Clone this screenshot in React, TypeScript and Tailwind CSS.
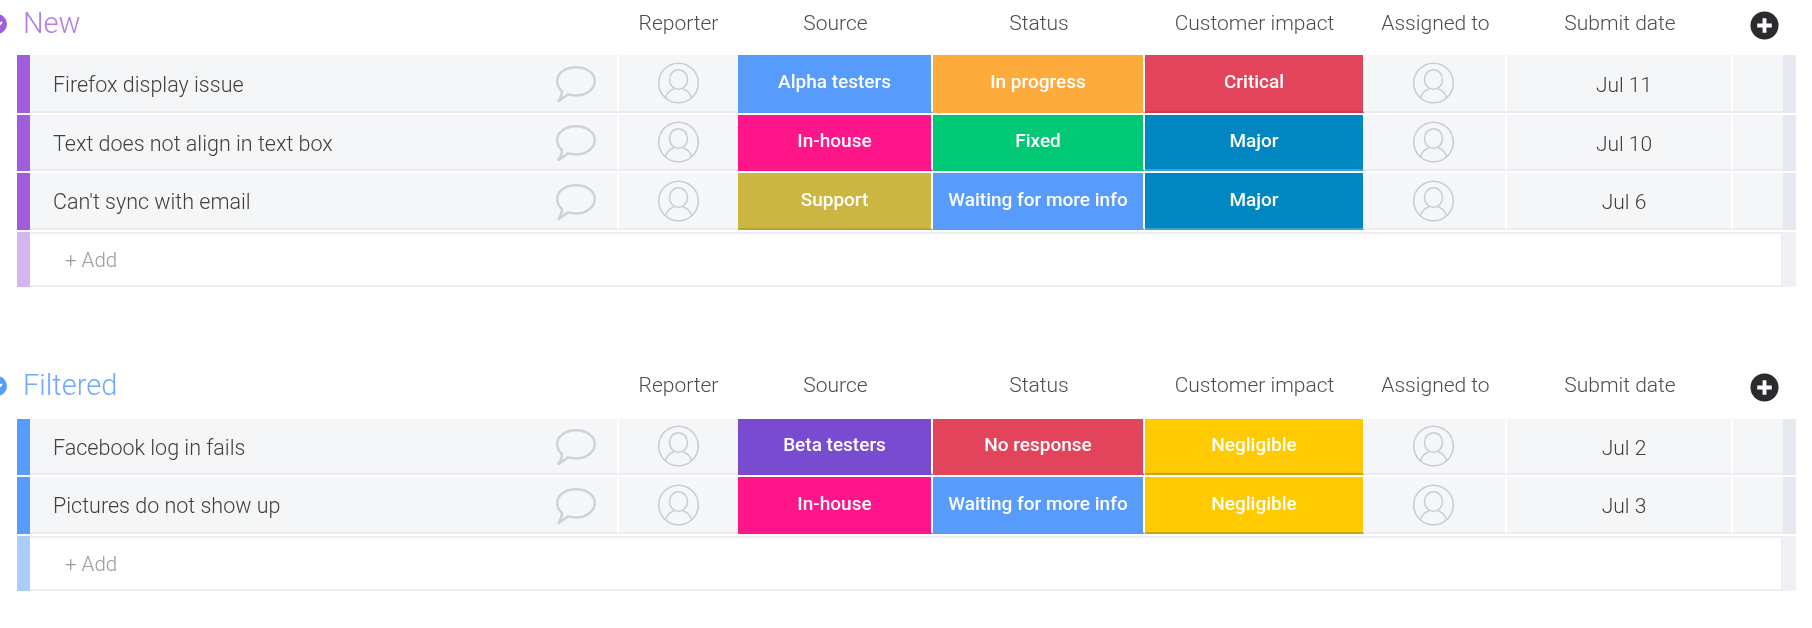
import React from "react";

type Row = {
  name: string;
  source: [string, string, string];
  status: [string, string, string];
  impact: [string, string, string];
  date: string;
  height: string;
};

const alpha: [string, string, string] = ["Alpha testers", "bg-[#579bfc]", "border-[#579bfc]"];
const inHouse: [string, string, string] = ["In-house", "bg-[#ff158a]", "border-[#ff158a]"];
const support: [string, string, string] = ["Support", "bg-[#cab641]", "border-[#b8a536]"];
const beta: [string, string, string] = ["Beta testers", "bg-[#784bd1]", "border-[#784bd1]"];
const waiting: [string, string, string] = ["Waiting for more info", "bg-[#579bfc]", "border-[#579bfc]"];
const major: [string, string, string] = ["Major", "bg-[#0086c0]", "border-[#3aa3d8]"];
const negligible: [string, string, string] = ["Negligible", "bg-[#ffcb00]", "border-[#c9a40a]"];

const newRows: Row[] = [
  {
    name: "Firefox display issue",
    source: alpha,
    status: ["In progress", "bg-[#fdab3d]", "border-[#fdab3d]"],
    impact: ["Critical", "bg-[#e2445c]", "border-[#cf3a50]"],
    date: "Jul 11",
    height: "h-[58px]",
  },
  {
    name: "Text does not align in text box",
    source: inHouse,
    status: ["Fixed", "bg-[#00c875]", "border-[#00c875]"],
    impact: major,
    date: "Jul 10",
    height: "h-[56px]",
  },
  {
    name: "Can't sync with email",
    source: support,
    status: waiting,
    impact: major,
    date: "Jul 6",
    height: "h-[57px]",
  },
];

const filteredRows: Row[] = [
  {
    name: "Facebook log in fails",
    source: beta,
    status: ["No response", "bg-[#e2445c]", "border-[#e2445c]"],
    impact: negligible,
    date: "Jul 2",
    height: "h-[56px]",
  },
  {
    name: "Pictures do not show up",
    source: inHouse,
    status: waiting,
    impact: negligible,
    date: "Jul 3",
    height: "h-[57px]",
  },
];

const PersonIcon = () => (
  <svg width="41" height="42" viewBox="0 0 41 42" fill="none" stroke="#c9cbd3" strokeWidth="1.5">
    <circle cx="20.5" cy="21" r="19.8" />
    <ellipse cx="20.5" cy="17.5" rx="9" ry="9.8" />
    <path d="M7.5 35.5C9 30.5 13 27.5 16 27M33.5 35.5C32 30.5 28 27.5 25 27" />
  </svg>
);

const CommentIcon = () => (
  <svg width="40" height="37" viewBox="0 0 40 37" fill="none" stroke="#cfd1d9" strokeWidth="2.4">
    <path d="M6 25C3 22.5 1.2 19 1.2 15C1.2 7 9.5 1.2 20 1.2S38.8 7 38.8 15S30.5 29.5 20 29.5C17 29.5 14.5 29 12 28.4L2 35.5C4.5 32 6 29 6 25Z" />
  </svg>
);

const PlusIcon = () => (
  <svg width="29" height="29" viewBox="0 0 30 30">
    <circle cx="15" cy="15" r="14.5" fill="#2b2b2f" />
    <path d="M15 7.5V22.5M7.5 15H22.5" stroke="#fff" strokeWidth="4" />
  </svg>
);

const Caret = ({ color }: { color: string }) => (
  <svg width="20" height="20" viewBox="0 0 20 20" className="shrink-0">
    <circle cx="10" cy="10" r="10" fill={color} />
    <path d="M5 8L10 13L15 8" fill="none" stroke="#fff" strokeWidth="2" />
  </svg>
);

const StatusCell = ({ cell, width, edge }: { cell: [string, string, string]; width: string; edge: string }) => (
  <div
    className={`${width} ${cell[1]} ${cell[2]} ${edge} flex shrink-0 items-center justify-center border-b-2 !border-r-white pb-[1px] text-[19px] font-medium text-white`}
  >
    {cell[0]}
  </div>
);

const Header = ({ title, color, dot }: { title: string; color: string; dot: string }) => (
  <div className="flex h-[40px] items-center text-[21px] font-light text-[#4d4d4d]">
    <div className="-ml-[30px] flex w-[619px] shrink-0 items-center gap-[16px]">
      <Caret color={dot} />
      <span className={`text-[29px] font-light ${color}`}>{title}</span>
    </div>
    <div className="ml-[13px] w-[119px] shrink-0 text-center">Reporter</div>
    <div className="w-[195px] shrink-0 text-center">Source</div>
    <div className="w-[212px] shrink-0 text-center">Status</div>
    <div className="w-[219px] shrink-0 text-center">Customer impact</div>
    <div className="w-[143px] shrink-0 text-center">Assigned to</div>
    <div className="w-[226px] shrink-0 text-center">Submit date</div>
    <div className="flex w-[50px] shrink-0 justify-center pl-[12px] pt-[2px]">
      <PlusIcon />
    </div>
  </div>
);

const TableRow = ({ row, bar }: { row: Row; bar: string }) => (
  <div className={`flex ${row.height} mb-[2px] w-[1779px] text-[#3f3f3f]`}>
    <div className={`w-[13px] shrink-0 ${bar}`} />
    <div className="flex w-[589px] shrink-0 items-center justify-between border-b-2 border-r-2 border-b-[#e9ebf0] border-r-white bg-[#f5f6f8] pl-[23px] pr-[21px]">
      <span className="pt-[4px] text-[21.5px] font-light">{row.name}</span>
      <span className="pt-[3px]">
        <CommentIcon />
      </span>
    </div>
    <div className="flex w-[119px] shrink-0 items-center justify-center border-b-2 border-b-[#e9ebf0] bg-[#f5f6f8]">
      <PersonIcon />
    </div>
    <StatusCell cell={row.source} width="w-[195px]" edge="border-r-2" />
    <StatusCell cell={row.status} width="w-[212px]" edge="border-r-2" />
    <StatusCell cell={row.impact} width="w-[219px]" edge="border-r" />
    <div className="flex w-[143px] shrink-0 items-center justify-center border-b-2 border-r-2 border-b-[#e9ebf0] border-r-white bg-[#f5f6f8] pr-[2px]">
      <PersonIcon />
    </div>
    <div className="flex w-[226px] shrink-0 items-center justify-center border-b-2 border-r-2 border-b-[#e9ebf0] border-r-white bg-[#f5f6f8] pl-[10px] pt-[5px] text-[21px] font-light">
      {row.date}
    </div>
    <div className="w-[50px] shrink-0 border-b-2 border-b-[#e9ebf0] bg-[#f5f6f8]" />
    <div className="w-[13px] shrink-0 bg-[#e6e9ef]" />
  </div>
);

const AddRow = ({ bar }: { bar: string }) => (
  <div className="flex h-[55px] w-[1779px]">
    <div className={`w-[13px] shrink-0 ${bar}`} />
    <div className="flex flex-1 items-center border-y-2 border-r-2 border-[#eceef2] bg-white pl-[35px] pt-[1px] text-[20.5px] font-light text-[#9a9a9a]">
      + Add
    </div>
    <div className="w-[13px] shrink-0 bg-[#eff1f5]" />
  </div>
);

const Group = ({
  title,
  color,
  dot,
  bar,
  addBar,
  rows,
  gap,
}: {
  title: string;
  color: string;
  dot: string;
  bar: string;
  addBar: string;
  rows: Row[];
  gap: string;
}) => (
  <section>
    <Header title={title} color={color} dot={dot} />
    <div className={gap}>
      {rows.map((row) => (
        <TableRow key={row.name} row={row} bar={bar} />
      ))}
      <AddRow bar={addBar} />
    </div>
  </section>
);

export default function App() {
  return (
    <div className="h-[628px] w-[1812px] overflow-hidden bg-white pl-[17px] pt-[4px] font-['Roboto',sans-serif] blur-[0.6px]">
      <Group
        title="New"
        color="text-[#b57de3]"
        dot="#a25ddc"
        bar="bg-[#a25ddc]"
        addBar="bg-[#d5b6ee]"
        rows={newRows}
        gap="mt-[11px]"
      />
      <div className="h-[79px]" />
      <Group
        title="Filtered"
        color="text-[#6ea9fc]"
        dot="#579bfc"
        bar="bg-[#579bfc]"
        addBar="bg-[#abcdfd]"
        rows={filteredRows}
        gap="mt-[13px]"
      />
    </div>
  );
}
